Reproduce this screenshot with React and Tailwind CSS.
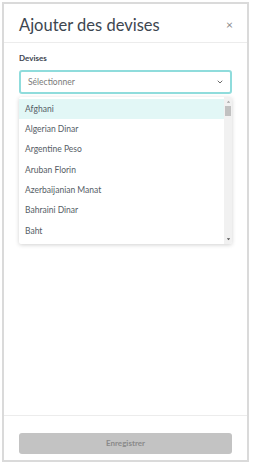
import React from "react";

const currencies = [
  "Afghani",
  "Algerian Dinar",
  "Argentine Peso",
  "Aruban Florin",
  "Azerbaijanian Manat",
  "Bahraini Dinar",
  "Baht",
];

export default function App() {
  return (
    <div className="w-[259px] h-[466px] bg-white pt-[2px] pl-[2px] font-['Lato',sans-serif]">
      <div className="w-[247px] h-[460px] border-2 border-[#dadada] bg-white flex flex-col">
        {/* Header */}
        <div className="h-[39px] shrink-0 border-b border-[#ececec] flex items-center justify-between pl-[15px] pr-[14px] pt-[4px]">
          <h1 className="text-[16.5px] leading-none text-[#3d4650]">Ajouter des devises</h1>
          <button className="text-[#8a8a8a] text-[12px] leading-none">×</button>
        </div>

        {/* Body */}
        <div className="flex-1 px-[15px] pt-[9px]">
          <label className="block text-[8px] font-bold text-[#3d4650] leading-[12px]">Devises</label>
          <div className="relative mt-[6px]">
            <div className="h-[24px] border-2 border-[#8fdcdc] rounded-[3px] flex items-center justify-between pl-[7px] pr-[6px]">
              <span className="text-[8.5px] text-[#7a7a7a]">Sélectionner</span>
              <svg width="8" height="8" viewBox="0 0 24 24" fill="none" stroke="#6b6b6b" strokeWidth="3" strokeLinecap="round" strokeLinejoin="round">
                <path d="M6 9l6 6 6-6" />
              </svg>
            </div>
            <div className="absolute left-0 right-0 top-[27px] h-[147px] bg-white rounded-[2px] shadow-[0_1px_4px_rgba(0,0,0,0.18)] flex overflow-hidden">
              <ul className="flex-1 pt-[2px]">
                {currencies.map((c, i) => (
                  <li
                    key={c}
                    className={`h-[20.3px] flex items-center pl-[6px] text-[8.5px] text-[#555d66] ${i === 0 ? "bg-[#e2f7f6]" : ""}`}
                  >
                    {c}
                  </li>
                ))}
              </ul>
              <div className="w-[8px] bg-[#f1f1f1] flex flex-col items-center">
                <svg width="5" height="6" viewBox="0 0 6 6" className="mt-[2px]">
                  <path d="M3 1.5L5 4H1z" fill="#a3a3a3" />
                </svg>
                <div className="w-[6px] h-[10px] bg-[#c1c1c1] mt-[1px]" />
                <div className="flex-1" />
                <svg width="5" height="6" viewBox="0 0 6 6" className="mb-[2px]">
                  <path d="M3 4.5L5 2H1z" fill="#505050" />
                </svg>
              </div>
            </div>
          </div>
        </div>

        {/* Footer */}
        <div className="h-[45px] shrink-0 border-t border-[#ececec] px-[15px] pt-[12px]">
          <button className="w-full h-[21px] rounded-[3px] bg-[#c3c3c3] text-[8px] font-bold text-[#8a8a8a]">
            Enregistrer
          </button>
        </div>
      </div>
    </div>
  );
}
